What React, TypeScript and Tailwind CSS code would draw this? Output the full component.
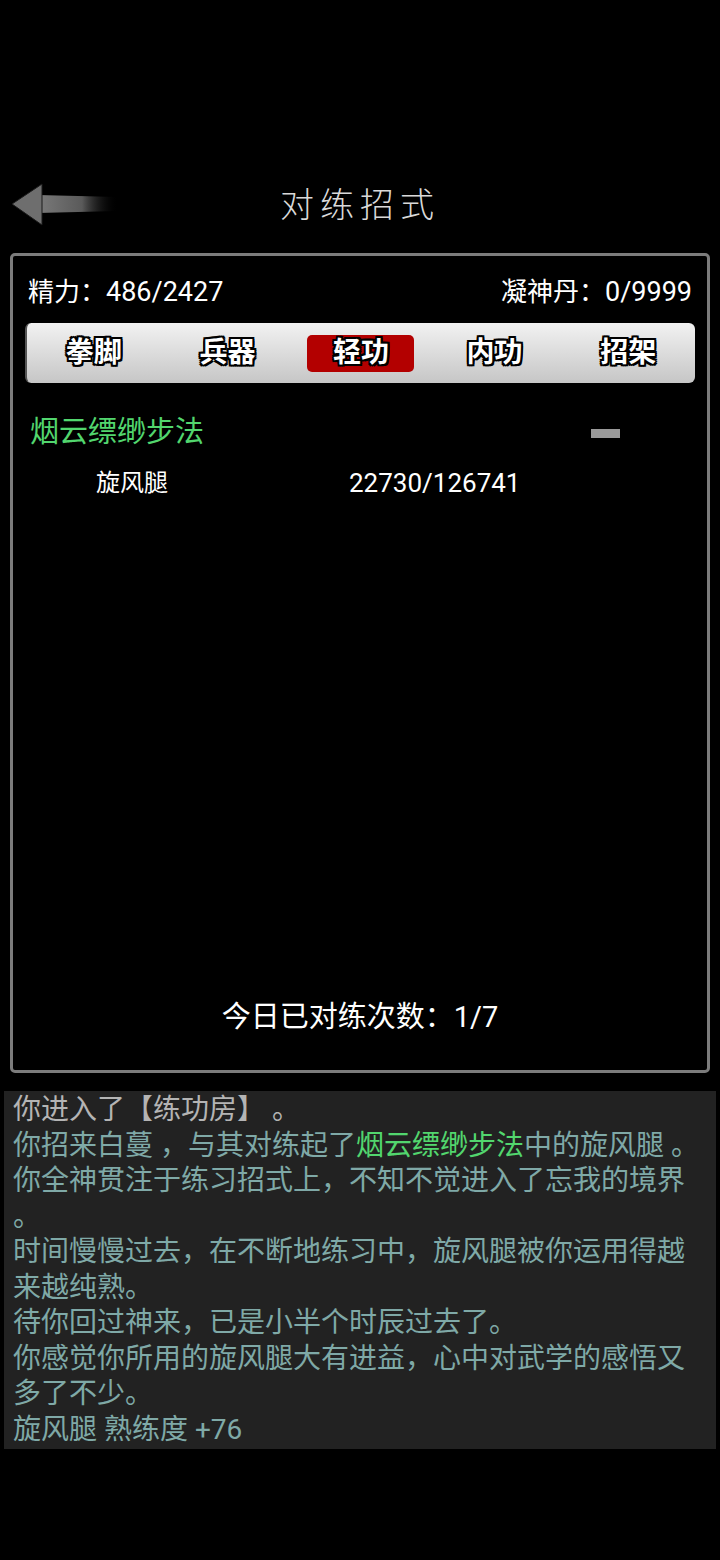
const cjk = { fontFamily: 'Roboto, "Noto Sans CJK SC", "Noto Sans", sans-serif' };

const outline =
  "[text-shadow:-2px_-2px_0_#000,2px_-2px_0_#000,-2px_2px_0_#000,2px_2px_0_#000,0_2px_0_#000,0_-2px_0_#000,2px_0_0_#000,-2px_0_0_#000]";

function BackArrow() {
  return (
    <svg width="112" height="48" viewBox="0 0 112 48">
      <defs>
        <linearGradient id="shaft" x1="0" y1="0" x2="1" y2="0">
          <stop offset="0" stopColor="#7a7a7a" />
          <stop offset="0.55" stopColor="#5a5a5a" />
          <stop offset="1" stopColor="#000" stopOpacity="0" />
        </linearGradient>
      </defs>
      <path d="M28 14 L108 16 L108 30 L28 32 Z" fill="url(#shaft)" />
      <path d="M2 23 L32 3 L32 44 Z" fill="#6e6e6e" stroke="#1a1a1a" strokeWidth="1" />
    </svg>
  );
}

export default function App() {
  const tabs = ["拳脚", "兵器", "轻功", "内功", "招架"];

  return (
    <div className="h-[1560px] w-[720px] bg-black flex flex-col" style={cjk}>
      {/* header */}
      <div className="relative mt-[181px] h-[48px] flex items-center justify-center">
        <div className="absolute left-[10px] top-0">
          <BackArrow />
        </div>
        <h1 className="text-[34px] font-light tracking-[6px] text-[#d9d9d9] leading-none">对练招式</h1>
      </div>

      {/* main panel */}
      <div className="mx-[10px] mt-[24px] h-[820px] border-[3px] border-[#7c7c7c] rounded-[5px] flex flex-col">
        <div className="mt-[16px] h-[40px] px-[15px] flex items-center justify-between text-[26px] text-white">
          <span>
            精力：<span className="text-[27px]">486/2427</span>
          </span>
          <span>
            凝神丹：<span className="text-[27px]">0/9999</span>
          </span>
        </div>

        <div className="mx-[12px] mt-[11px] h-[60px] rounded-[6px] bg-linear-to-b from-[#f2f2f2] to-[#c6c6c6] border-l-2 border-[#555] grid grid-cols-5 items-center">
          {tabs.map((t) => (
            <div key={t} className="flex justify-center">
              <span
                className={`h-[37px] w-[107px] rounded-[5px] flex items-center justify-center text-[28px] font-bold text-white leading-none ${outline} ${
                  t === "轻功" ? "bg-[#b30000]" : ""
                }`}
              >
                {t}
              </span>
            </div>
          ))}
        </div>

        <div className="mt-[30px] h-[40px] pl-[17px] pr-[87px] flex items-center justify-between">
          <span className="text-[29px] text-[#52d66e]">烟云缥缈步法</span>
          <span className="block w-[29px] h-[9px] bg-[#9a9a9a]" />
        </div>

        <div className="mt-[10px] h-[40px] flex items-center text-[24px] text-white">
          <span className="ml-[83px] w-[253px]">旋风腿</span>
          <span className="text-[26px]">22730/126741</span>
        </div>

        <div className="mt-auto mb-[32px] h-[40px] flex items-center justify-center text-[29px] text-white">
          今日已对练次数：1/7
        </div>
      </div>

      {/* log */}
      <div className="mx-[4px] mt-[18px] bg-[#222222] pl-[9px] pr-[6px] pt-[1px] pb-[2px] text-[28px] leading-[35.5px] text-[#7fa9a7]">
        <p className="text-[#b4b4b4]">你进入了【练功房】 。</p>
        <p>
          你招来白蔓 ，与其对练起了<span className="text-[#52d66e]">烟云缥缈步法</span>中的旋风腿 。
        </p>
        <p className="[line-break:anywhere]">你全神贯注于练习招式上，不知不觉进入了忘我的境界。</p>
        <p>时间慢慢过去，在不断地练习中，旋风腿被你运用得越来越纯熟。</p>
        <p>待你回过神来，已是小半个时辰过去了。</p>
        <p>你感觉你所用的旋风腿大有进益，心中对武学的感悟又多了不少。</p>
        <p>旋风腿 熟练度 +76</p>
      </div>
    </div>
  );
}
